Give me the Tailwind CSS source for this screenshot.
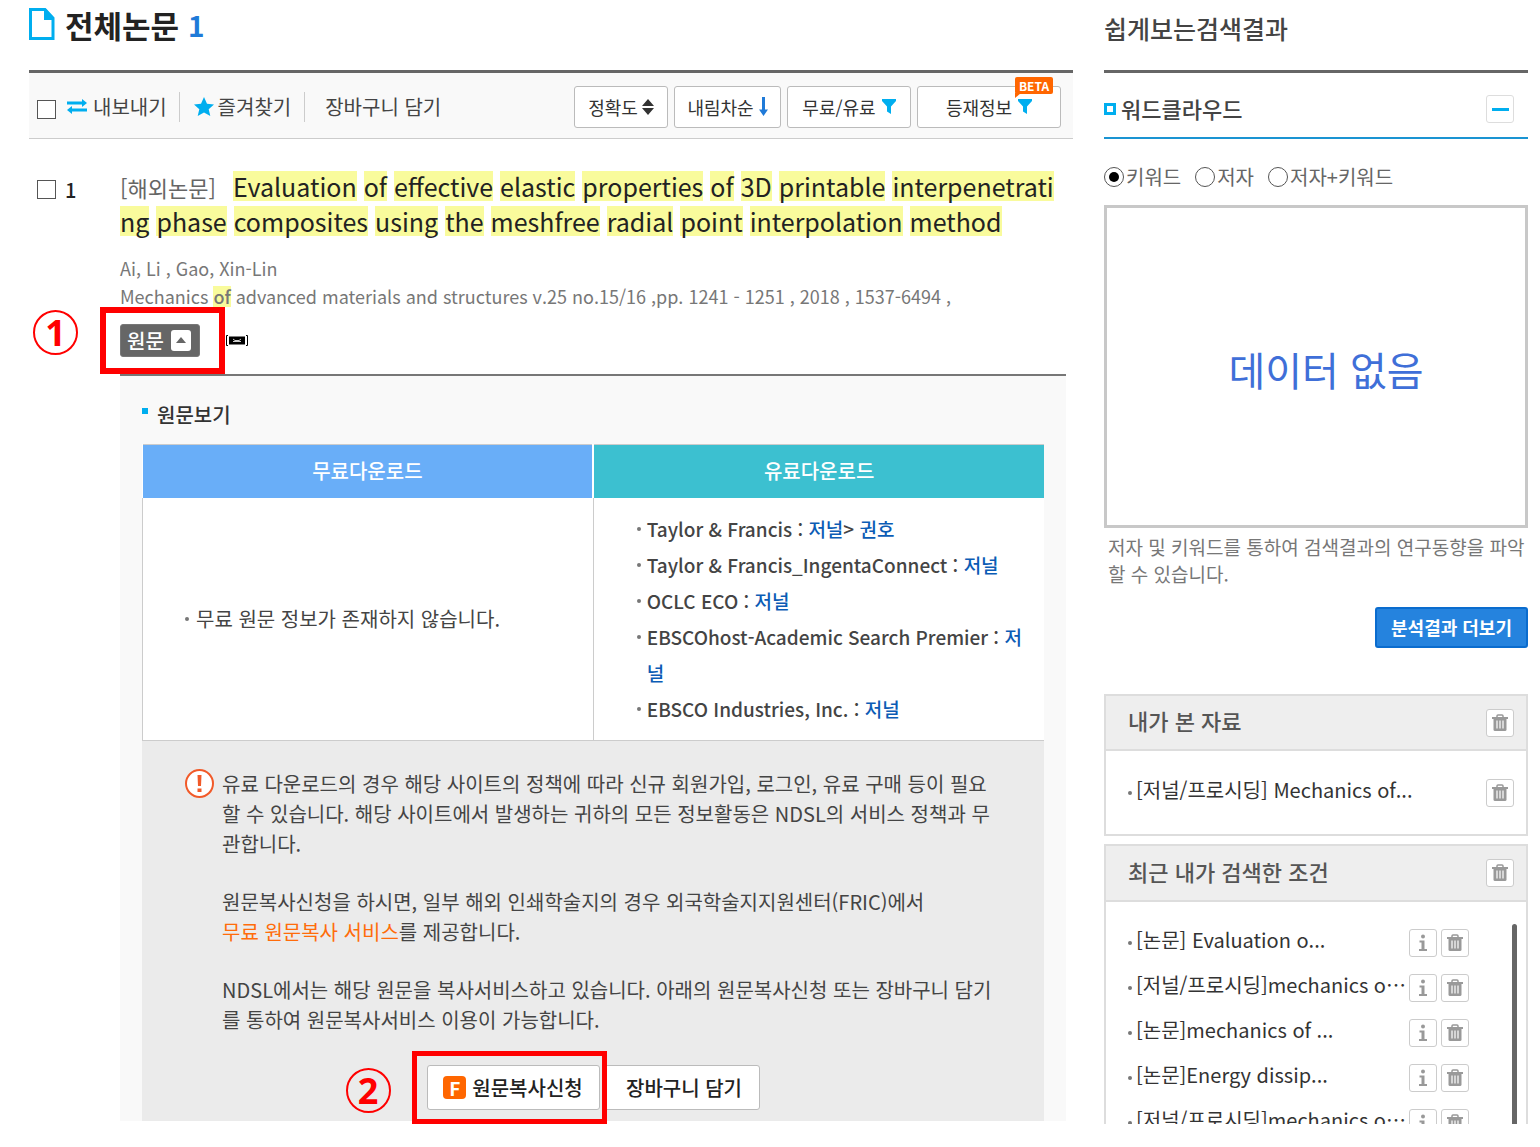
<!DOCTYPE html>
<html lang="ko">
<head>
    <meta charset="UTF-8">
    <meta name="viewport" content="width=device-width, initial-scale=1.0">
    <title>전체논문 - NDSL</title>
    <script src="https://cdn.jsdelivr.net/npm/@tailwindcss/browser@4"></script>
</head>
<body class="bg-white text-[#444] text-[20px] leading-[30px] font-['Noto_Sans_CJK_KR',sans-serif]">
    <!-- Shared icons -->
    <svg class="hidden">
        <symbol id="trash" viewBox="0 0 16 18">
            <path d="M5 3.500V2Q5 1 6 1h4q1 0 1 1v1.500" fill="none" stroke="#999" stroke-width="1.500"/>
            <path d="M0 3h16v2H0z" fill="#999"/>
            <path d="M1.500 5h13v10.500q0 1.500-1.500 1.500H3q-1.500 0-1.500-1.500z" fill="#999"/>
            <path d="M5 6.500v8M8 6.500v8M11 6.500v8" stroke="#fff" stroke-width="1.200"/>
        </symbol>
        <symbol id="info" viewBox="0 0 10 18">
            <circle cx="5" cy="2.500" r="2" fill="#999"/>
            <path d="M1.500 6.500h5V15H9v2H1v-2h2.500V8.500h-2z" fill="#999"/>
        </symbol>
        <symbol id="filter" viewBox="0 0 14 15">
            <path d="M0 0h14v2L9 7.500V15l-4-2.500v-5L0 2z" fill="#00aeef"/>
        </symbol>
    </svg>

    <div class="flex gap-[31px] pl-[29px] pr-[12px]">
        <main class="flex-1 min-w-0">
            <h1 class="flex items-center h-[70px] pb-[20px] text-[31px] font-bold text-[#222]">
                <svg class="w-[26px] h-[32px] mr-[10px] mb-[2px]" viewBox="0 0 26 32">
                    <path d="M1.500 1.500h14.500l8 8.500v20.500H1.500z" fill="#fff" stroke="#00aeef" stroke-width="3"/>
                    <path d="M15 1h2l8 9v2H15z" fill="#00aeef"/>
                </svg>
                전체논문 <span class="ml-[9px] text-[28px] text-[#1f7ad8]">1</span>
            </h1>

            <!-- Toolbar -->
            <div class="flex items-center h-[69px] border-t-3 border-t-[#666] border-b border-b-[#ccc] bg-[#f9f9f9] pt-[2px] pl-[8px] pr-[12px]">
                <input type="checkbox" id="checkAll" aria-label="전체 선택" class="appearance-none w-[19px] h-[19px] mt-[5px] border border-[#555] bg-white">
                <a href="#" class="flex items-center ml-[11px] pr-[12px] border-r border-[#ccc]">
                    <svg class="w-[20px] h-[15px] mr-[6px]" viewBox="0 0 20 15">
                        <path d="M0 2.500h15V0l5 4-5 4V5.500H0zM20 9.500H5V7l-5 4 5 4v-2.500h15z" fill="#00aeef"/>
                    </svg>
                    내보내기
                </a>
                <a href="#" class="flex items-center pl-[14px] pr-[13px] border-r border-[#ccc]">
                    <svg class="w-[20px] h-[20px] mr-[4px]" viewBox="0 0 20 20">
                        <path d="M10 0l3 6.700 7 .7-5.300 4.800L16.300 19 10 15.500 3.700 19l1.600-6.800L0 7.400l7-.7z" fill="#00aeef"/>
                    </svg>
                    즐겨찾기
                </a>
                <a href="#" class="ml-[20px]">장바구니 담기</a>

                <div class="flex gap-[6px] ml-auto text-[18px] text-[#333]">
                    <button class="flex items-center justify-center w-[94px] h-[42px] gap-[4px] border border-[#bbb] rounded-[3px] bg-white">
                        정확도
                        <svg class="w-[12px] h-[16px]" viewBox="0 0 12 16"><path d="M6 0l6 7H0zM0 9h12l-6 7z" fill="#333"/></svg>
                    </button>
                    <button class="flex items-center justify-center w-[107px] h-[42px] gap-[5px] border border-[#bbb] rounded-[3px] bg-white">
                        내림차순
                        <svg class="w-[9px] h-[19px]" viewBox="0 0 9 19"><path d="M3 0h3v12.500H9L4.500 19 0 12.500h3z" fill="#1f7ad8"/></svg>
                    </button>
                    <button class="flex items-center justify-center w-[124px] h-[42px] gap-[6px] border border-[#bbb] rounded-[3px] bg-white">
                        무료/유료
                        <svg class="w-[14px] h-[15px]"><use href="#filter"/></svg>
                    </button>
                    <button class="relative flex items-center justify-center w-[144px] h-[42px] gap-[6px] border border-[#bbb] rounded-[3px] bg-white">
                        등재정보
                        <svg class="w-[14px] h-[15px]"><use href="#filter"/></svg>
                        <span class="absolute right-[7px] -top-[10px] w-[38px] h-[17px] rounded-[2px] bg-[#ff6600] text-white text-[12px] leading-[17px] font-bold text-center">BETA
                            <svg class="absolute left-0 top-[16px] w-[6px] h-[5px]" viewBox="0 0 6 5"><path d="M0 0h6L0 5z" fill="#ff6600"/></svg>
                        </span>
                    </button>
                </div>
            </div>

            <!-- Result item -->
            <div class="flex pt-[32px] pl-[8px] pr-[7px]">
                <input type="checkbox" id="item1" class="appearance-none shrink-0 w-[19px] h-[19px] mt-[9px] border border-[#555] bg-white">
                <label for="item1" class="w-[64px] pl-[9px] pt-[4px] font-medium text-[#222]">1</label>
                <div class="flex-1 min-w-0">
                    <h2 class="text-[25px] leading-[35px] text-[#333] whitespace-nowrap [&_mark]:inline-block [&_mark]:align-top [&_mark]:leading-[30px] [&_mark]:bg-[#f9fb9c] [&_mark]:text-[#222]">
                        <span class="inline-block align-top w-[106px] text-[22px] leading-[32px] text-[#666]">[해외논문]</span>
                        <mark>Evaluation</mark> <mark>of</mark> <mark>effective</mark> <mark>elastic</mark> <mark>properties</mark> <mark>of</mark> <mark>3D</mark> <mark>printable</mark> <mark>interpenetrati</mark><br>
                        <mark>ng</mark> <mark>phase</mark> <mark>composites</mark> <mark>using</mark> <mark>the</mark> <mark>meshfree</mark> <mark>radial</mark> <mark>point</mark> <mark>interpolation</mark> <mark>method</mark>
                    </h2>
                    <p class="mt-[13px] text-[18px] leading-[28px] text-[#777] whitespace-nowrap">
                        Ai, Li , Gao, Xin-Lin<br>
                        Mechanics <mark class="inline-block leading-[21px] bg-[#f9fb9c] text-[#777] font-medium">of</mark> advanced materials and structures v.25 no.15/16 ,pp. 1241 - 1251 , 2018 , 1537-6494 ,
                    </p>

                    <div class="flex items-center mt-[14px] mb-[17px]">
                        <div class="relative">
                            <button class="flex items-center gap-[7px] w-[80px] h-[33px] pl-[6px] rounded-[3px] border border-[#777] bg-[#666] text-white font-medium">
                                원문
                                <svg class="w-[20px] h-[21px]" viewBox="0 0 20 21"><rect width="20" height="21" rx="3" fill="#fff"/><path d="M10 7l5 6H5z" fill="#666"/></svg>
                            </button>
                            <span class="absolute -left-[20px] -top-[17px] w-[125px] h-[67px] border-6 border-[#ff0000]"></span>
                            <span class="absolute -left-[87px] -top-[14px] flex items-center justify-center w-[45px] h-[45px] rounded-full border-2 border-[#ff0000] text-[#ff0000] text-[36px] font-bold font-['Noto_Sans']">1</span>
                        </div>
                        <svg class="w-[22px] h-[11px] ml-[26px]" viewBox="0 0 22 11">
                            <path d="M2 .5H.5v10H2M20 .5h1.500v10H20" fill="none" stroke="#000"/>
                            <rect x="3" y="1.500" width="16" height="8" fill="#000"/>
                            <path d="M7 4l2 1.500h4L15 4M7 6.500h8" fill="none" stroke="#ccc"/>
                        </svg>
                    </div>

                    <section class="border-t-2 border-[#777] bg-[#f9f9f9] px-[22px]">
                        <h3 class="flex items-center h-[68px] pt-[9px] font-medium text-[#333]">
                            <span class="w-[6px] h-[6px] mr-[9px] mb-[8px] bg-[#00aeef]"></span>원문보기
                        </h3>
                        <table class="w-full table-fixed border-collapse border-t border-[#ccc] bg-white">
                            <thead>
                                <tr class="h-[53px] text-white">
                                    <th class="font-medium bg-[#69aef8] border-r-2 border-white">무료다운로드</th>
                                    <th class="font-medium bg-[#3cc0d0]">유료다운로드</th>
                                </tr>
                            </thead>
                            <tbody>
                                <tr class="h-[243px] border-b border-[#ccc]">
                                    <td class="pl-[42px] border-x border-[#ccc] whitespace-nowrap">
                                        <ul><li class="flex items-center gap-[7px] before:w-[4px] before:h-[4px] before:rounded-full before:bg-[#777]">무료 원문 정보가 존재하지 않습니다.</li></ul>
                                    </td>
                                    <td class="pl-[43px] text-[19px] leading-[36px] font-medium whitespace-nowrap">
                                        <ul class="[&_a]:text-[#0b5cb5] [&_li]:relative [&_li]:pl-[10px] [&_li]:before:absolute [&_li]:before:left-0 [&_li]:before:top-[16px] [&_li]:before:w-[4px] [&_li]:before:h-[4px] [&_li]:before:rounded-full [&_li]:before:bg-[#777]">
                                            <li>Taylor &amp; Francis : <a href="#">저널</a>&gt; <a href="#">권호</a></li>
                                            <li>Taylor &amp; Francis_IngentaConnect : <a href="#">저널</a></li>
                                            <li>OCLC ECO : <a href="#">저널</a></li>
                                            <li>EBSCOhost-Academic Search Premier : <a href="#">저<br>널</a></li>
                                            <li>EBSCO Industries, Inc. : <a href="#">저널</a></li>
                                        </ul>
                                    </td>
                                </tr>
                            </tbody>
                        </table>

                        <div class="flex gap-[8px] bg-[#ebebeb] pt-[28px] pl-[43px] whitespace-nowrap">
                            <svg class="shrink-0 w-[29px] h-[29px]" viewBox="0 0 29 29">
                                <circle cx="14.500" cy="14.500" r="13.500" fill="#fff" stroke="#f15a29" stroke-width="2"/>
                                <path d="M12.500 6h4l-.5 11h-3zM12.500 19.500h4V23h-4z" fill="#f15a29"/>
                            </svg>
                            <div class="space-y-[28px]">
                                <p>유료 다운로드의 경우 해당 사이트의 정책에 따라 신규 회원가입, 로그인, 유료 구매 등이 필요<br>할 수 있습니다. 해당 사이트에서 발생하는 귀하의 모든 정보활동은 NDSL의 서비스 정책과 무<br>관합니다.</p>
                                <p>원문복사신청을 하시면, 일부 해외 인쇄학술지의 경우 외국학술지지원센터(FRIC)에서<br><span class="text-[#ff6c0a]">무료 원문복사 서비스</span>를 제공합니다.</p>
                                <p>NDSL에서는 해당 원문을 복사서비스하고 있습니다. 아래의 원문복사신청 또는 장바구니 담기<br>를 통하여 원문복사서비스 이용이 가능합니다.</p>
                            </div>
                        </div>
                        <div class="flex justify-center gap-[4px] bg-[#ebebeb] pt-[30px] pb-[11px] font-medium text-[#222]">
                            <div class="relative">
                                <button class="flex items-center justify-center gap-[6px] w-[173px] h-[45px] border border-[#bbb] rounded-[3px] bg-white">
                                    <span class="w-[23px] h-[23px] rounded-[4px] bg-[#ff6600] text-white text-[19px] leading-[23px] font-bold">F</span>
                                    원문복사신청
                                </button>
                                <span class="absolute -left-[15px] -top-[14px] z-10 w-[195px] h-[73px] border-5 border-[#ff0000]"></span>
                                <span class="absolute -left-[81px] top-[3px] flex items-center justify-center w-[45px] h-[45px] rounded-full border-2 border-[#ff0000] text-[#ff0000] text-[36px] font-bold font-['Noto_Sans']">2</span>
                            </div>
                            <button class="w-[156px] h-[45px] pl-[5px] border border-[#bbb] rounded-[3px] bg-white">장바구니 담기</button>
                        </div>
                    </section>
                </div>
            </div>
        </main>

        <aside class="w-[424px] shrink-0">
            <h2 class="h-[70px] pt-[13px] text-[25px] font-medium text-[#444]">쉽게보는검색결과</h2>
            <div class="flex items-center h-[69px] border-t-3 border-t-[#666] border-b-2 border-b-[#1a94d2] pt-[8px] pr-[14px]">
                <span class="w-[12px] h-[12px] mr-[5px] border-3 border-[#00aeef]"></span>
                <h3 class="text-[22px] font-medium pb-[3px]">워드클라우드</h3>
                <button aria-label="접기" class="flex items-center justify-center w-[28px] h-[28px] ml-auto border border-[#ddd] rounded-[3px]">
                    <span class="w-[17px] h-[3px] bg-[#00aeef]"></span>
                </button>
            </div>

            <div class="flex gap-[14px] pt-[23px] pb-[13px] text-[#666]">
                <label class="flex items-center gap-[2px]"><input type="radio" name="cloud" checked class="appearance-none w-[20px] h-[20px] rounded-full border border-[#555] bg-white checked:bg-black checked:bg-clip-content p-[4px]">키워드</label>
                <label class="flex items-center gap-[2px]"><input type="radio" name="cloud" class="appearance-none w-[20px] h-[20px] rounded-full border border-[#555] bg-white checked:bg-black checked:bg-clip-content p-[4px]">저자</label>
                <label class="flex items-center gap-[2px]"><input type="radio" name="cloud" class="appearance-none w-[20px] h-[20px] rounded-full border border-[#555] bg-white checked:bg-black checked:bg-clip-content p-[4px]">저자+키워드</label>
            </div>
            <div class="flex items-center justify-center h-[323px] pl-[20px] pt-[4px] border-3 border-[#c8c8c8] text-[40px] text-[#3f6fd8]">데이터 없음</div>
            <p class="mt-[5px] pl-[4px] text-[19px] leading-[27px] text-[#777] whitespace-nowrap">저자 및 키워드를 통하여 검색결과의 연구동향을 파악<br>할 수 있습니다.</p>
            <div class="flex justify-end mt-[20px]">
                <button class="w-[153px] h-[41px] pb-[2px] border-2 border-[#0a6cce] rounded-[3px] bg-[#2583de] text-white text-[18px] font-bold">분석결과 더보기</button>
            </div>

            <!-- Viewed items -->
            <section class="mt-[46px] border-2 border-[#ddd]">
                <div class="flex items-center h-[55px] pl-[22px] pr-[12px] border-b-2 border-[#ddd] bg-[#eee]">
                    <h3 class="text-[22px] font-medium text-[#555] pb-[5px]">내가 본 자료</h3>
                    <button aria-label="삭제" class="flex items-center justify-center w-[28px] h-[28px] ml-auto border border-[#ccc] rounded-[3px] bg-white"><svg class="w-[16px] h-[18px]"><use href="#trash"/></svg></button>
                </div>
                <div class="flex items-center h-[83px] pl-[22px] pr-[12px]">
                    <span class="w-[4px] h-[4px] mr-[4px] rounded-full bg-[#777]"></span>
                    <a href="#" class="pb-[6px] text-[#333]">[저널/프로시딩] Mechanics of...</a>
                    <button aria-label="삭제" class="flex items-center justify-center w-[28px] h-[28px] ml-auto border border-[#ccc] rounded-[3px] bg-white"><svg class="w-[16px] h-[18px]"><use href="#trash"/></svg></button>
                </div>
            </section>

            <!-- Recent searches -->
            <section class="mt-[8px] border-2 border-b-0 border-[#ddd]">
                <div class="flex items-center h-[56px] pl-[22px] pr-[12px] border-b-2 border-[#ddd] bg-[#eee]">
                    <h3 class="text-[22px] font-medium text-[#555] pb-[5px]">최근 내가 검색한 조건</h3>
                    <button aria-label="삭제" class="flex items-center justify-center w-[28px] h-[28px] ml-auto border border-[#ccc] rounded-[3px] bg-white"><svg class="w-[16px] h-[18px]"><use href="#trash"/></svg></button>
                </div>
                <div class="flex h-[222px] pt-[18px] pl-[22px] pr-[9px] overflow-hidden">
                    <ul id="recentList" class="flex-1"></ul>
                    <div class="w-[5px] ml-[43px] mt-[4px] rounded-t-full bg-[#666]"></div>
                </div>
            </section>
        </aside>
    </div>

    <script>
        const recent = [
            '[논문] Evaluation o...',
            '[저널/프로시딩]mechanics o⋯',
            '[논문]mechanics of ...',
            '[논문]Energy dissip...',
            '[저널/프로시딩]mechanics o⋯'
        ];
        const recentList = document.getElementById('recentList');

        recent.forEach(text => {
            const item = document.createElement('li');
            item.className = 'flex items-center h-[45px] whitespace-nowrap';
            item.innerHTML = `
                <span class="w-[4px] h-[4px] mr-[4px] rounded-full bg-[#777]"></span>
                <a href="#" class="pb-[6px] text-[#333]">${text}</a>
                <button aria-label="정보" class="flex items-center justify-center shrink-0 w-[28px] h-[28px] ml-auto border border-[#ccc] rounded-[3px] bg-white"><svg class="w-[10px] h-[18px]"><use href="#info"/></svg></button>
                <button aria-label="삭제" class="flex items-center justify-center shrink-0 w-[28px] h-[28px] ml-[4px] border border-[#ccc] rounded-[3px] bg-white"><svg class="w-[16px] h-[18px]"><use href="#trash"/></svg></button>
            `;
            recentList.appendChild(item);
        });
    </script>
</body>
</html>
